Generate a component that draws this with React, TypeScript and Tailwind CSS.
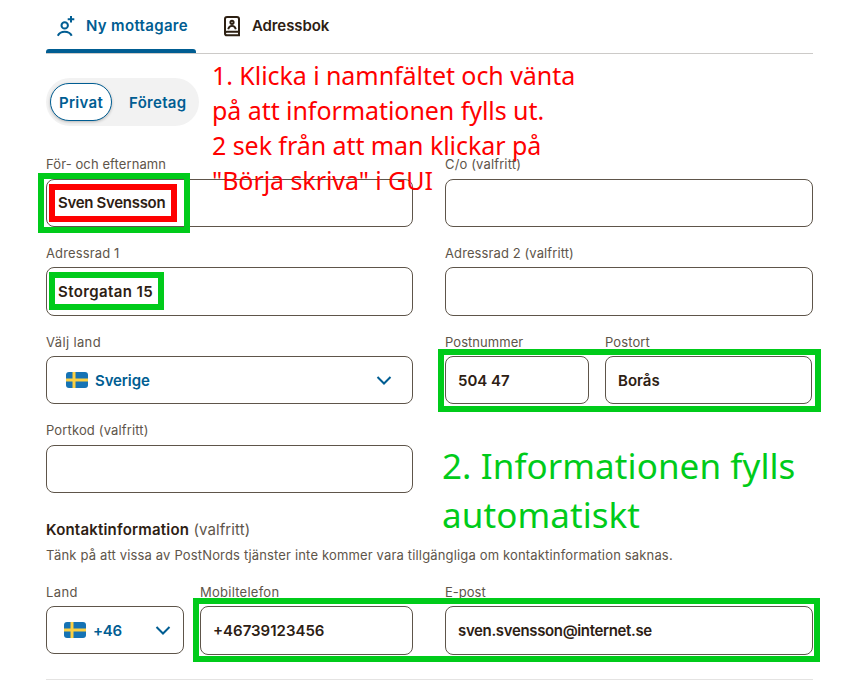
import type { ReactNode } from "react";

function PersonAddIcon() {
  return (
    <svg className="h-6 w-6 shrink-0" viewBox="0 0 24 24" fill="none" stroke="currentColor" strokeWidth="2">
      <circle cx="10.7" cy="11.4" r="3.2" />
      <path d="M3.8 21.8c1.3-2.7 3.8-4 6.9-4s5.7 1.3 7 4" />
      <path d="M17 1.9v6.6M13.7 5.2h6.6" />
    </svg>
  );
}

function AddressBookIcon() {
  return (
    <svg className="h-6 w-6 shrink-0" viewBox="0 0 24 24" fill="none" stroke="currentColor" strokeWidth="2">
      <path d="M5 19.2V5.1C5 3.9 5.9 3 7.1 3h9.8c1.2 0 2.1.9 2.1 2.1v12.6H6.8c-1 0-1.8.7-1.8 1.7s.8 1.8 1.8 1.8H20M19 17.5v3.7" />
      <circle cx="12" cy="8.3" r="1.6" />
      <path d="M8.2 15.2c.5-2.1 1.9-3.4 3.8-3.4s3.3 1.3 3.8 3.4" strokeWidth="1.8" />
    </svg>
  );
}

function Chevron() {
  return (
    <svg className="h-4 w-4 text-[#005d92]" viewBox="0 0 16 16" fill="none" stroke="currentColor" strokeWidth="2">
      <path d="M1.5 5 8 11.5 14.5 5" />
    </svg>
  );
}

function Flag() {
  return (
    <svg className="h-4 w-[22px] shrink-0" viewBox="0 0 22 16">
      <rect width="22" height="16" rx="3" fill="#1673b4" />
      <path d="M8 0v16M0 8h22" stroke="#fbd043" strokeWidth="3" />
    </svg>
  );
}

function Field({
  label,
  className = "",
  boxClass = "h-12",
  labelClass = "pt-px tracking-[0.14px]",
  children,
}: {
  label: string;
  className?: string;
  boxClass?: string;
  labelClass?: string;
  children?: ReactNode;
}) {
  return (
    <div className={`flex flex-col ${className}`}>
      <label className={`h-6 whitespace-nowrap text-[13px] leading-[18px] text-[#5e554a] ${labelClass}`}>{label}</label>
      <div
        className={`flex items-center rounded-lg border border-[#5e554a] px-3 text-[15px] font-semibold whitespace-nowrap text-[#2d2013] ${boxClass}`}
      >
        {children}
      </div>
    </div>
  );
}

export default function App() {
  return (
    <div className="relative h-[694px] w-[854px] overflow-hidden bg-white pl-[46px] font-['Inter','Liberation_Sans',sans-serif]">
      <div className="w-[767px]">
        <nav className="flex h-[54px] border-b border-[#cccac8] text-[15px] font-semibold">
          <div className="flex h-[53px] w-[150px] flex-col justify-between text-[#005d92]">
            <div className="flex h-[49px] items-center gap-2 pt-[2px] pl-2">
              <PersonAddIcon />
              <span className="pt-px tracking-[0.33px] whitespace-nowrap">Ny mottagare</span>
            </div>
            <div className="h-1 shrink-0 rounded-t-[3px] bg-[#005d92]" />
          </div>
          <div className="flex h-[49px] items-center gap-2 pt-[2px] pl-[24px] text-[#2d2013]">
            <AddressBookIcon />
            <span className="pt-px tracking-[-0.1px]">Adressbok</span>
          </div>
        </nav>

        <div className="mt-6 flex h-12 w-[153px] items-center rounded-full bg-[#f2f2f2] pl-1 text-[15px] font-semibold text-[#005d92]">
          <div className="flex h-[38px] w-[62px] items-center justify-center rounded-full border border-[#005d92] bg-white pt-[2px] tracking-[0.3px] shadow-[0_1px_3px_rgba(0,0,0,0.25)]">
            Privat
          </div>
          <div className="pt-[2px] pl-[17px] tracking-[0.3px]">Företag</div>
        </div>

        <div className="mt-[29px] grid grid-cols-[367px_368px] gap-x-8">
          <Field label="För- och efternamn" labelClass="tracking-[0.1px]">
            <span className="-ml-px tracking-[-0.3px]">Sven Svensson</span>
          </Field>
          <Field label="C/o (valfritt)" labelClass="tracking-[0.14px]" />
        </div>

        <div className="mt-4 grid grid-cols-[367px_368px] gap-x-8">
          <Field label="Adressrad 1" boxClass="h-[49px]" labelClass="pt-px tracking-[0.14px]">
            <span className="-ml-px pt-[2px] tracking-[0.4px]">Storgatan 15</span>
          </Field>
          <Field label="Adressrad 2 (valfritt)" boxClass="h-[49px]" labelClass="pt-px tracking-[0.1px]" />
        </div>

        <div className="mt-4 grid grid-cols-[367px_368px] gap-x-8">
          <Field label="Välj land" labelClass="pt-px tracking-[0.35px]">
            <div className="flex w-full items-center justify-between pr-2 pl-[7px] text-[#005d92]">
              <div className="flex items-center gap-[7px]">
                <Flag />
                <span className="pt-[2px] tracking-[-0.1px]">Sverige</span>
              </div>
              <Chevron />
            </div>
          </Field>
          <div className="flex gap-4">
            <Field label="Postnummer" className="w-36" labelClass="pt-px tracking-[0.05px]">
              <span className="pt-[2px]">504 47</span>
            </Field>
            <Field label="Postort" className="w-[207px]" labelClass="pt-px tracking-[0.1px]">
              <span className="pt-[2px]">Borås</span>
            </Field>
          </div>
        </div>

        <div className="mt-[17px] w-[367px]">
          <Field label="Portkod (valfritt)" labelClass="tracking-[0.14px]" />
        </div>

        <h2 className="mt-[26px] text-[15px] leading-[22px] text-[#5e554a]">
          <span className="font-semibold tracking-[0.2px] text-[#2d2013]">Kontaktinformation</span>{" "}
          <span className="tracking-[0.1px]">(valfritt)</span>
        </h2>
        <p className="mt-1 text-[13px] leading-5 tracking-[0.16px] whitespace-nowrap text-[#5e554a]">
          Tänk på att vissa av PostNords tjänster inte kommer vara tillgängliga om kontaktinformation saknas.
        </p>

        <div className="mt-[17px] flex">
          <Field label="Land" className="w-[138px]" labelClass="pt-px tracking-[0.4px]">
            <div className="flex w-full items-center justify-between pl-[5px] text-[#005d92]">
              <div className="flex items-center gap-[7px]">
                <Flag />
                <span className="pt-[2px] tracking-[-0.3px]">+46</span>
              </div>
              <Chevron />
            </div>
          </Field>
          <Field label="Mobiltelefon" className="ml-4 w-[213px]" boxClass="h-[49px]" labelClass="pt-px tracking-[0.25px]">
            <span className="pt-[2px]">+46739123456</span>
          </Field>
          <Field label="E-post" className="ml-8 w-[368px]" boxClass="h-[49px]" labelClass="pt-px tracking-[0px]">
            <span className="pt-[2px] tracking-[-0.35px]">sven.svensson@internet.se</span>
          </Field>
        </div>
        <div className="mt-6 h-px bg-[#e4e3e2]" />
      </div>

      {/* Instruction annotations laid over the form */}
      <div className="absolute top-[173px] left-[38px] h-[60px] w-[152px] border-6 border-[#00cb1a]" />
      <div className="absolute top-[184px] left-[49px] h-[38px] w-[128px] border-6 border-[#fe0000]" />
      <div className="absolute top-[272px] left-[49px] h-[38px] w-[115px] border-6 border-[#00cb1a]" />
      <div className="absolute top-[349px] left-[438px] h-[63px] w-[383px] border-6 border-[#00cb1a]" />
      <div className="absolute top-[598px] left-[193px] h-[64px] w-[627px] border-6 border-[#00cb1a]" />
      <p className="absolute top-[58px] left-[212px] font-['Noto_Sans',sans-serif] text-[25px] leading-[35px] tracking-[-0.06px] whitespace-nowrap text-[#fe0000]">
        1. Klicka i namnfältet och vänta
        <br />
        på att informationen fylls ut.
        <br />2 sek från att man klickar på
        <br />
        &quot;Börja skriva&quot; i GUI
      </p>
      <p className="absolute top-[441px] left-[442px] font-['Noto_Sans',sans-serif] text-[35px] leading-[49px] tracking-[0.08px] whitespace-nowrap text-[#00cb1a]">
        2. Informationen fylls
        <br />
        automatiskt
      </p>
    </div>
  );
}
